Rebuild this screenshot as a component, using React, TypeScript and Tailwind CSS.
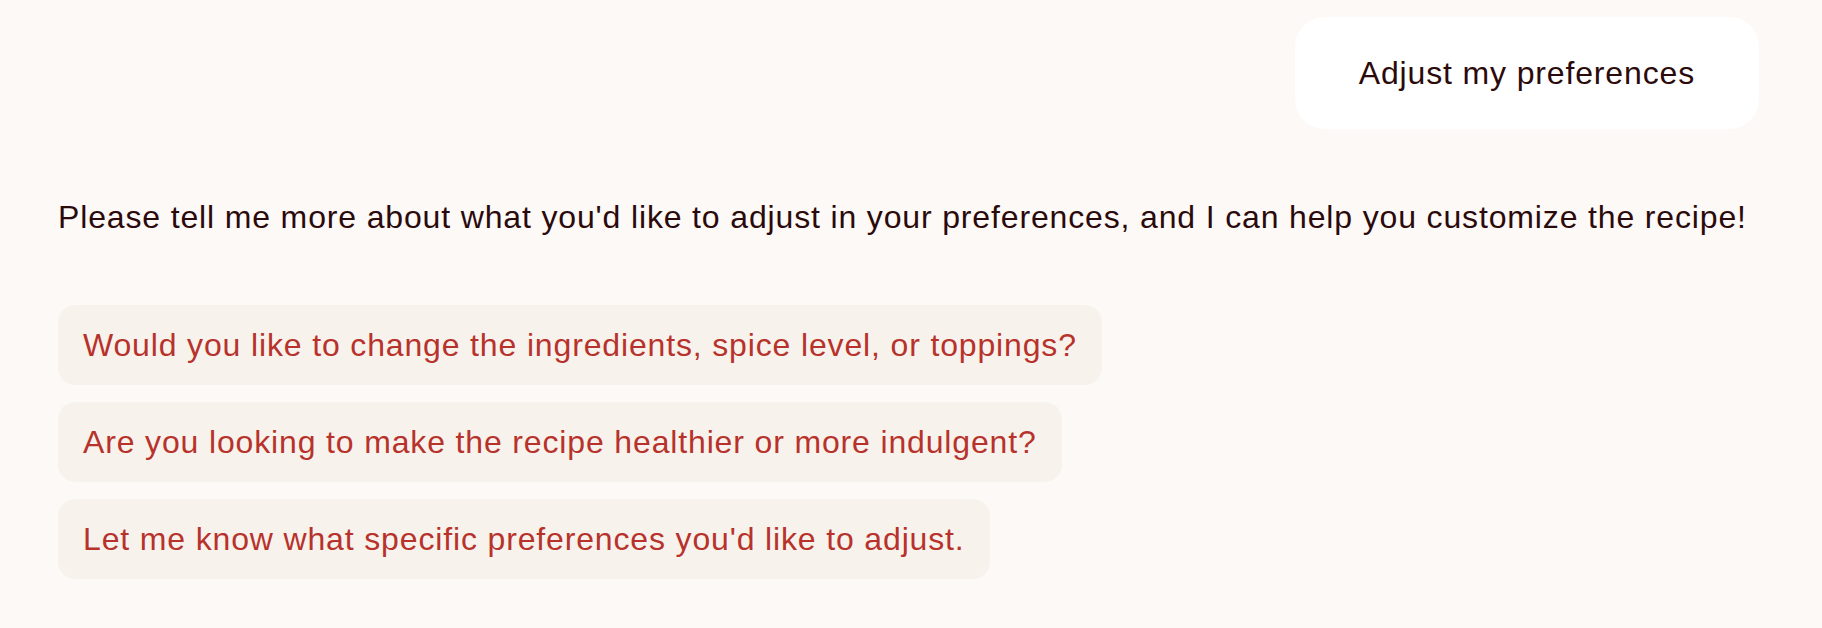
import React from "react";

const chips = [
  "Would you like to change the ingredients, spice level, or toppings?",
  "Are you looking to make the recipe healthier or more indulgent?",
  "Let me know what specific preferences you'd like to adjust.",
];

export default function App() {
  return (
    <div
      className="w-[1822px] h-[628px] bg-[#fdf9f7] overflow-hidden pt-[17px] pl-[58px] pr-[63px]"
      style={{ fontFamily: '"Liberation Sans", Arial, sans-serif' }}
    >
      <div className="flex justify-end">
        <div className="bg-white rounded-[30px] px-[64px] py-[32px] text-[32px] leading-[48px] tracking-[0.85px] text-[#2b0a0c]">
          Adjust my preferences
        </div>
      </div>
      <p className="mt-[64px] text-[32px] leading-[48px] tracking-[0.85px] text-[#2b0a0c]">
        Please tell me more about what you'd like to adjust in your preferences, and I can help you customize the recipe!
      </p>
      <div className="mt-[64px] flex flex-col items-start gap-[17px]">
        {chips.map((c) => (
          <div
            key={c}
            className="bg-[#f7f3ec] rounded-[17px] px-[25px] py-[16px] text-[32px] leading-[48px] tracking-[0.85px] text-[#b8322c]"
          >
            {c}
          </div>
        ))}
      </div>
    </div>
  );
}
